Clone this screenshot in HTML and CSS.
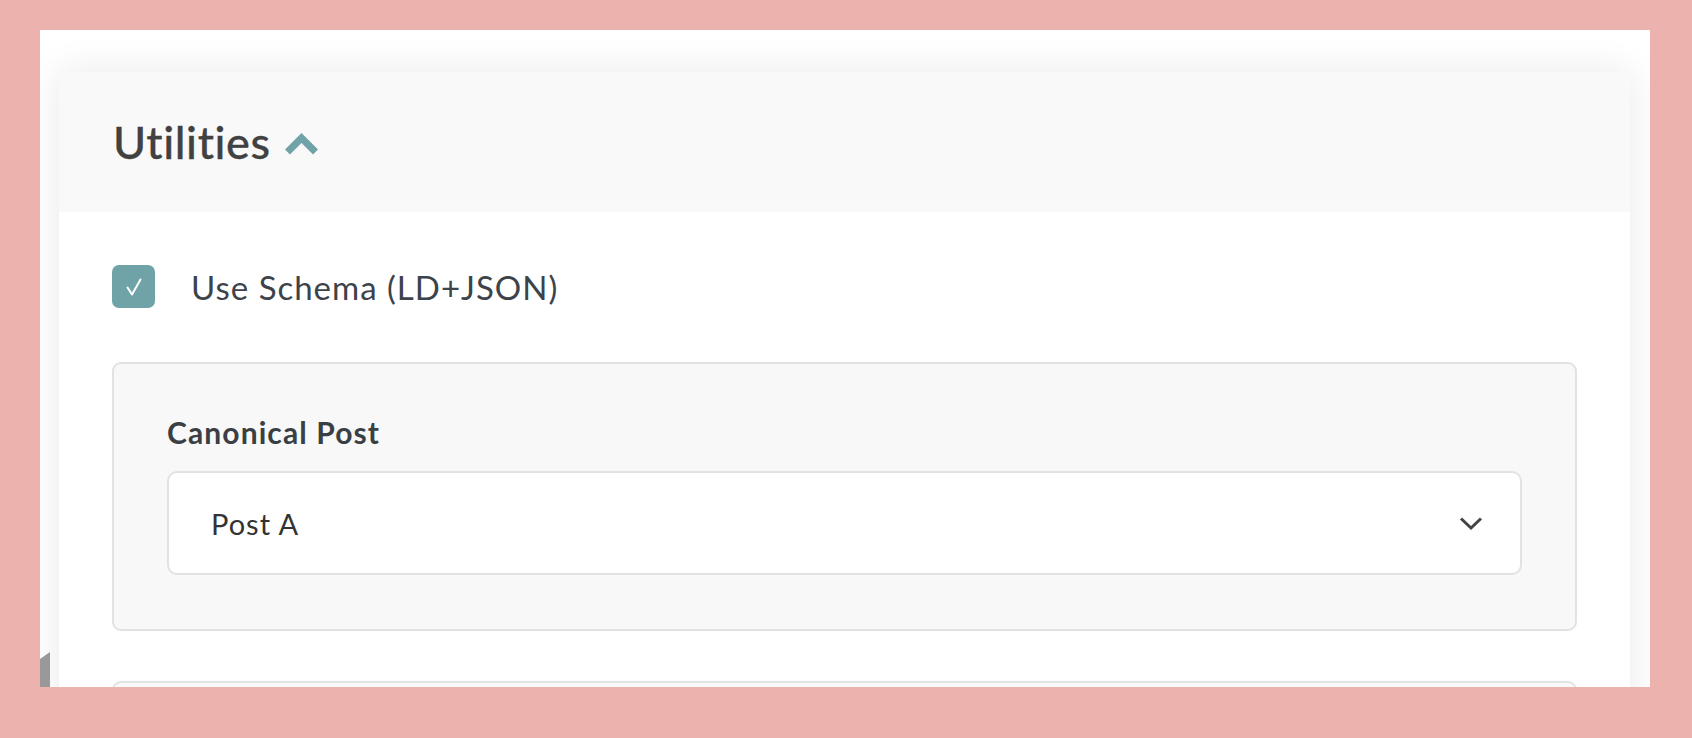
FILE: index.html
```html
<!DOCTYPE html>
<html lang="en">
<head>
    <meta charset="UTF-8">
    <title>Utilities</title>
    <link rel="stylesheet" href="styles.css">
</head>
<body>
    <div class="frame">
        <div class="panel">
            <div class="panel-header">
                <h2>Utilities</h2>
                <svg class="toggle" width="35" height="24" viewBox="0 0 35 24">
                    <polyline points="3.5,21 17.5,7 31.5,21" fill="none" stroke="#6fa3a8" stroke-width="7"/>
                </svg>
            </div>
            <div class="panel-body">
                <label class="check-row">
                    <span class="checkbox">
                        <svg width="18" height="20" viewBox="0 0 18 20">
                            <path d="M2.5 10.5 L7 17.5 L15.5 2.5" fill="none" stroke="#fff" stroke-width="2" stroke-linecap="round" stroke-linejoin="round"/>
                        </svg>
                    </span>
                    Use Schema (LD+JSON)
                </label>

                <div class="field-box">
                    <div class="field-label">Canonical Post</div>
                    <div class="select">
                        <span>Post A</span>
                        <svg width="24" height="15" viewBox="0 0 24 15">
                            <polyline points="2,2.5 12,12 22,2.5" fill="none" stroke="#444" stroke-width="3"/>
                        </svg>
                    </div>
                </div>

                <div class="field-box field-box-next"></div>
            </div>
        </div>
        <div class="scroll-nub"></div>
    </div>
</body>
</html>
```

FILE: styles.css
```css
body {
    margin: 0;
    background: #ecb3ae;
    font-family: Lato, "Open Sans", sans-serif;
    font-variant-ligatures: none;
    height: 738px;
    overflow: hidden;
}
.frame {
    position: relative;
    margin: 30px 0 0 40px;
    width: 1610px;
    height: 657px;
    background: #fff;
    overflow: hidden;
}
.panel {
    margin: 42px 20px 0 19px;
    background: #fff;
    box-shadow: 0 0 36px rgba(0, 0, 0, 0.09);
}
.panel-header {
    height: 140px;
    background: #f9f9f9;
    display: flex;
    align-items: center;
    padding-left: 54px;
}
.panel-header h2 {
    margin: 0;
    font-size: 45px;
    font-weight: 500;
    color: #414141;
    line-height: 1;
    letter-spacing: 0.6px;
    -webkit-text-stroke: 0.3px #414141;
}
.toggle {
    margin-left: 13px;
    margin-top: 2px;
}
.panel-body {
    padding: 53px 53px 0 53px;
}
.check-row {
    display: flex;
    align-items: center;
    gap: 36px;
    font-size: 33px;
    color: #3c434a;
    letter-spacing: 1px;
}
.checkbox {
    width: 43px;
    height: 43px;
    border-radius: 7px;
    background: #6fa3a8;
    display: flex;
    align-items: center;
    justify-content: center;
}
.field-box {
    margin-top: 54px;
    background: #f8f8f8;
    border: 2px solid #e2e2e2;
    border-radius: 9px;
    padding: 50px 53px 54px 53px;
}
.field-box-next {
    margin-top: 50px;
    height: 120px;
}
.field-label {
    font-size: 30px;
    font-weight: 700;
    color: #3a3f44;
    line-height: 36px;
    letter-spacing: 1.1px;
    margin-bottom: 21px;
}
.select {
    height: 100px;
    background: #fff;
    border: 2px solid #e2e2e2;
    border-radius: 10px;
    display: flex;
    align-items: center;
    justify-content: space-between;
    padding: 0 37px 0 42px;
    font-size: 29px;
    color: #333;
    letter-spacing: 1px;
}
.scroll-nub {
    position: absolute;
    left: 0;
    bottom: 0;
    width: 10px;
    height: 35px;
    background: #999;
    clip-path: polygon(0 20%, 100% 0, 100% 100%, 0 100%);
}
```
